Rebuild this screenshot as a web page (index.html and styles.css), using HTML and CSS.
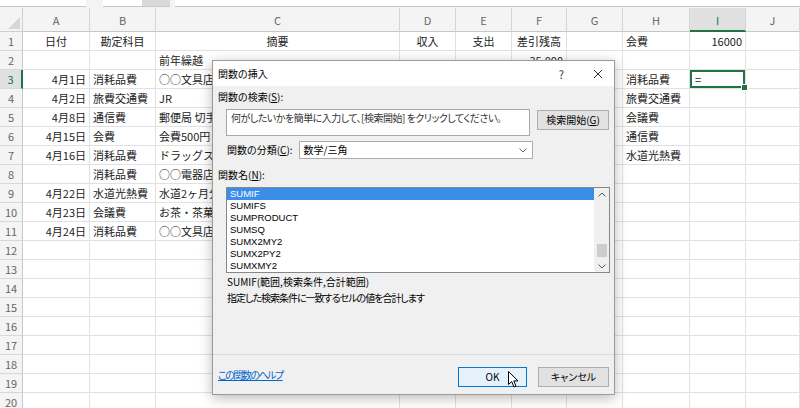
FILE: index.html
```html
<!DOCTYPE html>
<html lang="ja">

<head>
    <meta charset="UTF-8">
    <title>関数の挿入</title>
    <link rel="stylesheet" href="styles.css">
</head>

<body>

    <div class="fbar">
        <span class="namebox"></span>
        <span class="fx-btns"><i></i></span>
        <span class="finput"></span>
    </div>

    <div id="sheet" class="sheet"></div>

    <div class="dialog">
        <div class="dlg-title">
            <span>関数の挿入</span>
            <span class="dlg-ctrl">
                <span class="help">?</span>
                <svg class="close" width="10" height="10" viewBox="0 0 10 10">
                    <path d="M1 1 L9 9 M9 1 L1 9" stroke="#333" stroke-width="1" fill="none" />
                </svg>
            </span>
        </div>

        <div class="dlg-body">
            <div class="lbl">関数の検索(<u>S</u>):</div>
            <div class="search-row">
                <div class="search-box">何がしたいかを簡単に入力して、[検索開始] をクリックしてください。</div>
                <button class="btn">検索開始(<u>G</u>)</button>
            </div>

            <div class="cat-row">
                <span class="lbl">関数の分類(<u>C</u>):</span>
                <div class="select">
                    <span>数学/三角</span>
                    <svg width="8" height="5" viewBox="0 0 8 5">
                        <path d="M0.5 0.5 L4 4 L7.5 0.5" stroke="#666" fill="none" />
                    </svg>
                </div>
            </div>

            <div class="lbl fn-lbl">関数名(<u>N</u>):</div>
            <div class="listbox">
                <ul class="items">
                    <li class="on">SUMIF</li>
                    <li>SUMIFS</li>
                    <li>SUMPRODUCT</li>
                    <li>SUMSQ</li>
                    <li>SUMX2MY2</li>
                    <li>SUMX2PY2</li>
                    <li>SUMXMY2</li>
                </ul>
                <div class="vscroll">
                    <svg width="8" height="5" viewBox="0 0 8 5">
                        <path d="M0.5 4.5 L4 1 L7.5 4.5" stroke="#555" fill="none" />
                    </svg>
                    <div class="track"><div class="thumb"></div></div>
                    <svg width="8" height="5" viewBox="0 0 8 5">
                        <path d="M0.5 0.5 L4 4 L7.5 0.5" stroke="#555" fill="none" />
                    </svg>
                </div>
            </div>

            <div class="desc">
                <div>SUMIF(範囲,検索条件,合計範囲)</div>
                <div class="desc-text">指定した検索条件に一致するセルの値を合計します</div>
            </div>
        </div>

        <div class="dlg-foot">
            <a class="help-link" href="#">この関数のヘルプ</a>
            <div class="btns">
                <button class="btn ok">OK
                    <svg class="cursor" width="11" height="17" viewBox="0 0 11 17">
                        <path d="M0.5 0.5 L0.5 13.5 L3.7 10.6 L6 16 L8 15.1 L5.8 9.9 L10 9.9 Z" fill="#fff" stroke="#000" stroke-width="1" />
                    </svg>
                </button>
                <button class="btn cancel">キャンセル</button>
            </div>
        </div>
    </div>

    <script>
        const rows = [
            ['日付', '勘定科目', '摘要', '収入', '支出', '差引残高', '', '会費', '16000', ''],
            ['', '', '前年繰越', '', '', '35,000', '', '', '', ''],
            ['4月1日', '消耗品費', '○○文具店', '', '', '', '', '消耗品費', '=', ''],
            ['4月2日', '旅費交通費', 'JR', '', '', '', '', '旅費交通費', '', ''],
            ['4月8日', '通信費', '郵便局 切手', '', '', '', '', '会議費', '', ''],
            ['4月15日', '会費', '会費500円', '', '', '', '', '通信費', '', ''],
            ['4月16日', '消耗品費', 'ドラッグスト', '', '', '', '', '水道光熱費', '', ''],
            ['', '消耗品費', '○○電器店', '', '', '', '', '', '', ''],
            ['4月22日', '水道光熱費', '水道2ヶ月分', '', '', '', '', '', '', ''],
            ['4月23日', '会議費', 'お茶・茶菓子', '', '', '', '', '', '', ''],
            ['4月24日', '消耗品費', '○○文具店', '', '', '', '', '', '', '']
        ];

        const COLS = ['A', 'B', 'C', 'D', 'E', 'F', 'G', 'H', 'I', 'J'];
        const sheet = document.getElementById('sheet');

        function cell(text, cls) {
            const d = document.createElement('div');
            d.className = cls;
            d.textContent = text;
            sheet.appendChild(d);
        }

        cell('', 'corner');
        COLS.forEach(c => cell(c, c === 'I' ? 'colhd hd-on' : 'colhd'));

        for (let r = 1; r <= 20; r++) {
            cell(r, r === 3 ? 'rowhd hd-on' : 'rowhd');
            const vals = rows[r - 1] || [];
            COLS.forEach((c, i) => {
                let cls = 'c';
                if (r === 1 && i <= 5) cls += ' ctr';
                else if (c === 'A' || c === 'F' || (c === 'I' && r === 1)) cls += ' num';
                if (r === 3 && c === 'I') cls += ' active';
                cell(vals[i] || '', cls);
            });
        }
    </script>

</body>

</html>
```

FILE: styles.css
```css
body {
    margin: 0;
    width: 800px;
    height: 408px;
    overflow: hidden;
    position: relative;
    background: #fff;
    font-family: "Noto Sans CJK JP", "Noto Sans", sans-serif;
    color: #222;
}

/* formula bar strip at the very top */
.fbar {
    height: 8px;
    background: #f3f3f3;
    display: flex;
    align-items: flex-start;
}

.namebox {
    width: 86px;
    height: 6px;
    background: #fff;
    border-bottom: 1px solid #c8c8c8;
}

.fx-btns {
    width: 67px;
    height: 6px;
    margin-left: 17px;
    background: #fff;
    border-bottom: 1px solid #c8c8c8;
    display: flex;
    justify-content: flex-end;
}

.fx-btns i {
    width: 28px;
    background: #d9d9d9;
}

.finput {
    flex: 1;
    height: 6px;
    margin-left: 5px;
    background: #fff;
    border-bottom: 1px solid #c8c8c8;
}

/* worksheet */
.sheet {
    display: grid;
    grid-template-columns: 23px 67px 66px 244px 56px 56px 55px 56px 67px 56px 54px;
    grid-template-rows: 24px;
    grid-auto-rows: 19px;
    font-size: 11px;
}

.sheet > div {
    box-sizing: border-box;
    border-right: 1px solid #e1e1e1;
    border-bottom: 1px solid #e1e1e1;
    white-space: nowrap;
    overflow: hidden;
}

.corner {
    background: #f4f4f4;
    position: relative;
    border-color: #cfcfcf !important;
}

.corner::after {
    content: "";
    position: absolute;
    right: 2px;
    bottom: 2px;
    border-left: 12px solid transparent;
    border-bottom: 12px solid #d6d6d6;
}

.colhd {
    background: #f4f4f4;
    color: #666;
    text-align: center;
    line-height: 24px;
    border-right-color: #d4d4d4 !important;
    border-bottom-color: #c8c8c8 !important;
}

.rowhd {
    background: #f4f4f4;
    color: #666;
    text-align: center;
    line-height: 18px;
    border-right-color: #c8c8c8 !important;
    border-bottom-color: #d8d8d8 !important;
}

.colhd.hd-on {
    background: #e0e0e0;
    border-bottom: 2px solid #217346 !important;
    color: #217346;
}

.rowhd.hd-on {
    background: #e0e0e0;
    border-right: 2px solid #217346 !important;
    color: #217346;
}

.c {
    padding: 0 3px;
    line-height: 18px;
    color: #222;
}

.c.ctr {
    text-align: center;
}

.c.num {
    text-align: right;
}

.c.active {
    position: relative;
    overflow: visible !important;
    box-shadow: inset 0 0 0 2px #217346;
    padding-left: 5px;
}

.c.active::after {
    content: "";
    position: absolute;
    right: -3px;
    bottom: -3px;
    width: 5px;
    height: 5px;
    background: #217346;
    border: 1px solid #fff;
}

/* insert function dialog */
.dialog {
    position: absolute;
    left: 212px;
    top: 60px;
    width: 403px;
    height: 335px;
    box-sizing: border-box;
    border: 1px solid #9a9a9a;
    background: #f0f0f0;
    box-shadow: 0 3px 12px rgba(0, 0, 0, 0.28);
    display: flex;
    flex-direction: column;
    font-size: 10px;
    line-height: 14px;
    color: #000;
    font-feature-settings: "palt";
    z-index: 5;
}

.dlg-title {
    height: 25px;
    background: #fff;
    display: flex;
    align-items: center;
    justify-content: space-between;
    padding: 0 0 0 5px;
}

.dlg-ctrl {
    display: flex;
    align-items: center;
}

.help {
    font-size: 11px;
    color: #333;
    margin-right: 29px;
}

.close {
    margin-right: 11px;
}

.dlg-body {
    flex: 1;
    padding: 4px 5px 0;
}

.lbl u,
.btn u {
    text-underline-offset: 1px;
}

.search-row {
    display: flex;
    align-items: flex-start;
    margin: 5px 0 0 8px;
    gap: 7px;
}

.search-box {
    width: 304px;
    height: 27px;
    box-sizing: border-box;
    background: #fff;
    border: 1px solid #a8a8a8;
    padding: 1px 4px;
    color: #333;
    letter-spacing: -0.5px;
}

.btn {
    font: inherit;
    font-feature-settings: "palt";
    color: #000;
    height: 20px;
    padding: 0;
    background: #e1e1e1;
    border: 1px solid #adadad;
    box-sizing: border-box;
}

.search-row .btn {
    width: 72px;
    margin-top: 1px;
}

.cat-row {
    display: flex;
    align-items: center;
    margin: 5px 0 0 9px;
    gap: 6px;
}

.select {
    width: 234px;
    height: 18px;
    box-sizing: border-box;
    background: #fff;
    border: 1px solid #adadad;
    display: flex;
    align-items: center;
    justify-content: space-between;
    padding: 0 5px 0 4px;
}

.fn-lbl {
    margin-top: 9px;
}

.listbox {
    margin: 5px 0 0 8px;
    width: 384px;
    height: 86px;
    box-sizing: border-box;
    border: 1px solid #828790;
    background: #fff;
    display: flex;
}

.items {
    list-style: none;
    margin: 0;
    padding: 0;
    flex: 1;
}

.items li {
    height: 12px;
    line-height: 12px;
    padding-left: 3px;
    font-family: "Liberation Sans", Arial, sans-serif;
    font-size: 9.5px;
}

.items li.on {
    background: #3a8ee8;
    color: #fff;
}

.vscroll {
    width: 15px;
    background: #f0f0f0;
    display: flex;
    flex-direction: column;
    align-items: center;
    padding: 4px 0 3px;
    box-sizing: border-box;
}

.track {
    flex: 1;
    width: 100%;
    display: flex;
    justify-content: center;
    padding-top: 47px;
    box-sizing: border-box;
}

.thumb {
    width: 10px;
    height: 13px;
    background: #cdcdcd;
}

.desc {
    margin: 1px 0 0 9px;
    line-height: 16px;
}

.desc-text {
    letter-spacing: -1px;
}

.dlg-foot {
    height: 40px;
    box-sizing: border-box;
    border-top: 1px solid #dcdcdc;
    display: flex;
    align-items: flex-start;
    justify-content: space-between;
    padding: 12px 5px 0 5px;
}

.help-link {
    color: #0066cc;
    margin-top: 1px;
    letter-spacing: -1.5px;
}

.btns {
    display: flex;
    gap: 11px;
}

.btn.ok {
    width: 69px;
    background: #e5f1fb;
    border-color: #0078d7;
    position: relative;
}

.cursor {
    position: absolute;
    left: 49px;
    top: 3px;
}

.btn.cancel {
    width: 71px;
}
```
